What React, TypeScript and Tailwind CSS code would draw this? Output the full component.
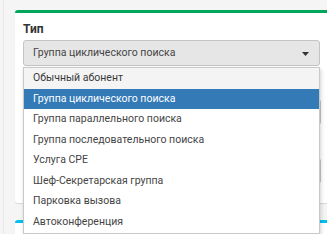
import React from 'react'

const OPTIONS = [
  'Обычный абонент',
  'Группа циклического поиска',
  'Группа параллельного поиска',
  'Группа последовательного поиска',
  'Услуга CPE',
  'Шеф-Секретарская группа',
  'Парковка вызова',
  'Автоконференция',
]

const SELECTED = 1

export default function App() {
  return (
    <div className="flex h-[234px] w-[327px] overflow-hidden bg-[#f5f5f5] font-['Roboto','Liberation_Sans',sans-serif] text-[#333]">
      <div className="w-[4px] shrink-0 border-r border-[#e9e9e9]" />
      <div className="flex shrink-0 flex-col gap-[17px] pl-[11px] pt-[10px]">
        {/* Card with the type selector */}
        <div className="h-[193px] w-[320px] shrink-0 rounded-[3px] border-t-[3px] border-[#00a65a] bg-white pl-[8px] pt-[9px] shadow-[0_1px_1px_rgba(0,0,0,0.12)]">
          <div className="mb-[4px] text-[12px] font-bold leading-[14px]">Тип</div>
          <div className="relative z-10 w-[297px]">
            <div className="flex h-[26px] items-center justify-between rounded-[3px] border border-[#c4c4c4] bg-[#e6e6e6] pl-[9px] pr-[10px] text-[10.5px] text-[#444]">
              <span>{OPTIONS[SELECTED]}</span>
              <svg width="7" height="4" viewBox="0 0 7 4" className="mt-[1px]">
                <polygon points="0,0 7,0 3.5,4" fill="#333" />
              </svg>
            </div>
            {/* Open option list */}
            <div className="absolute left-0 top-[27px] w-[297px] border border-[#c9c9c9] bg-white shadow-[1px_2px_4px_rgba(0,0,0,0.18)]">
              {OPTIONS.map((o, i) => (
                <div
                  key={o}
                  className={`h-[20.57px] pl-[9px] text-[10.5px] leading-[20.57px] ${
                    i === SELECTED ? 'bg-[#337ab7] text-white' : i === 0 ? 'bg-[#f4f4f4] text-[#3a3a3a]' : 'text-[#444]'
                  }`}
                >
                  {o}
                </div>
              ))}
            </div>
          </div>
          {/* fields hidden behind the list */}
          <div className="mt-[33px] h-[26px] w-[298px] rounded-[3px] border border-[#c8c8c8]" />
          <div className="mt-[16px] h-[2px] w-[2px] bg-[#e0a040]" />
          <div className="mt-[15px] h-[26px] w-[298px] rounded-[3px] border border-[#c8c8c8]" />
        </div>
        {/* Next card */}
        <div className="h-[40px] w-[320px] shrink-0 rounded-[3px] border-t-[3px] border-[#00c0ef] bg-white shadow-[0_1px_1px_rgba(0,0,0,0.12)]" />
      </div>
    </div>
  )
}
